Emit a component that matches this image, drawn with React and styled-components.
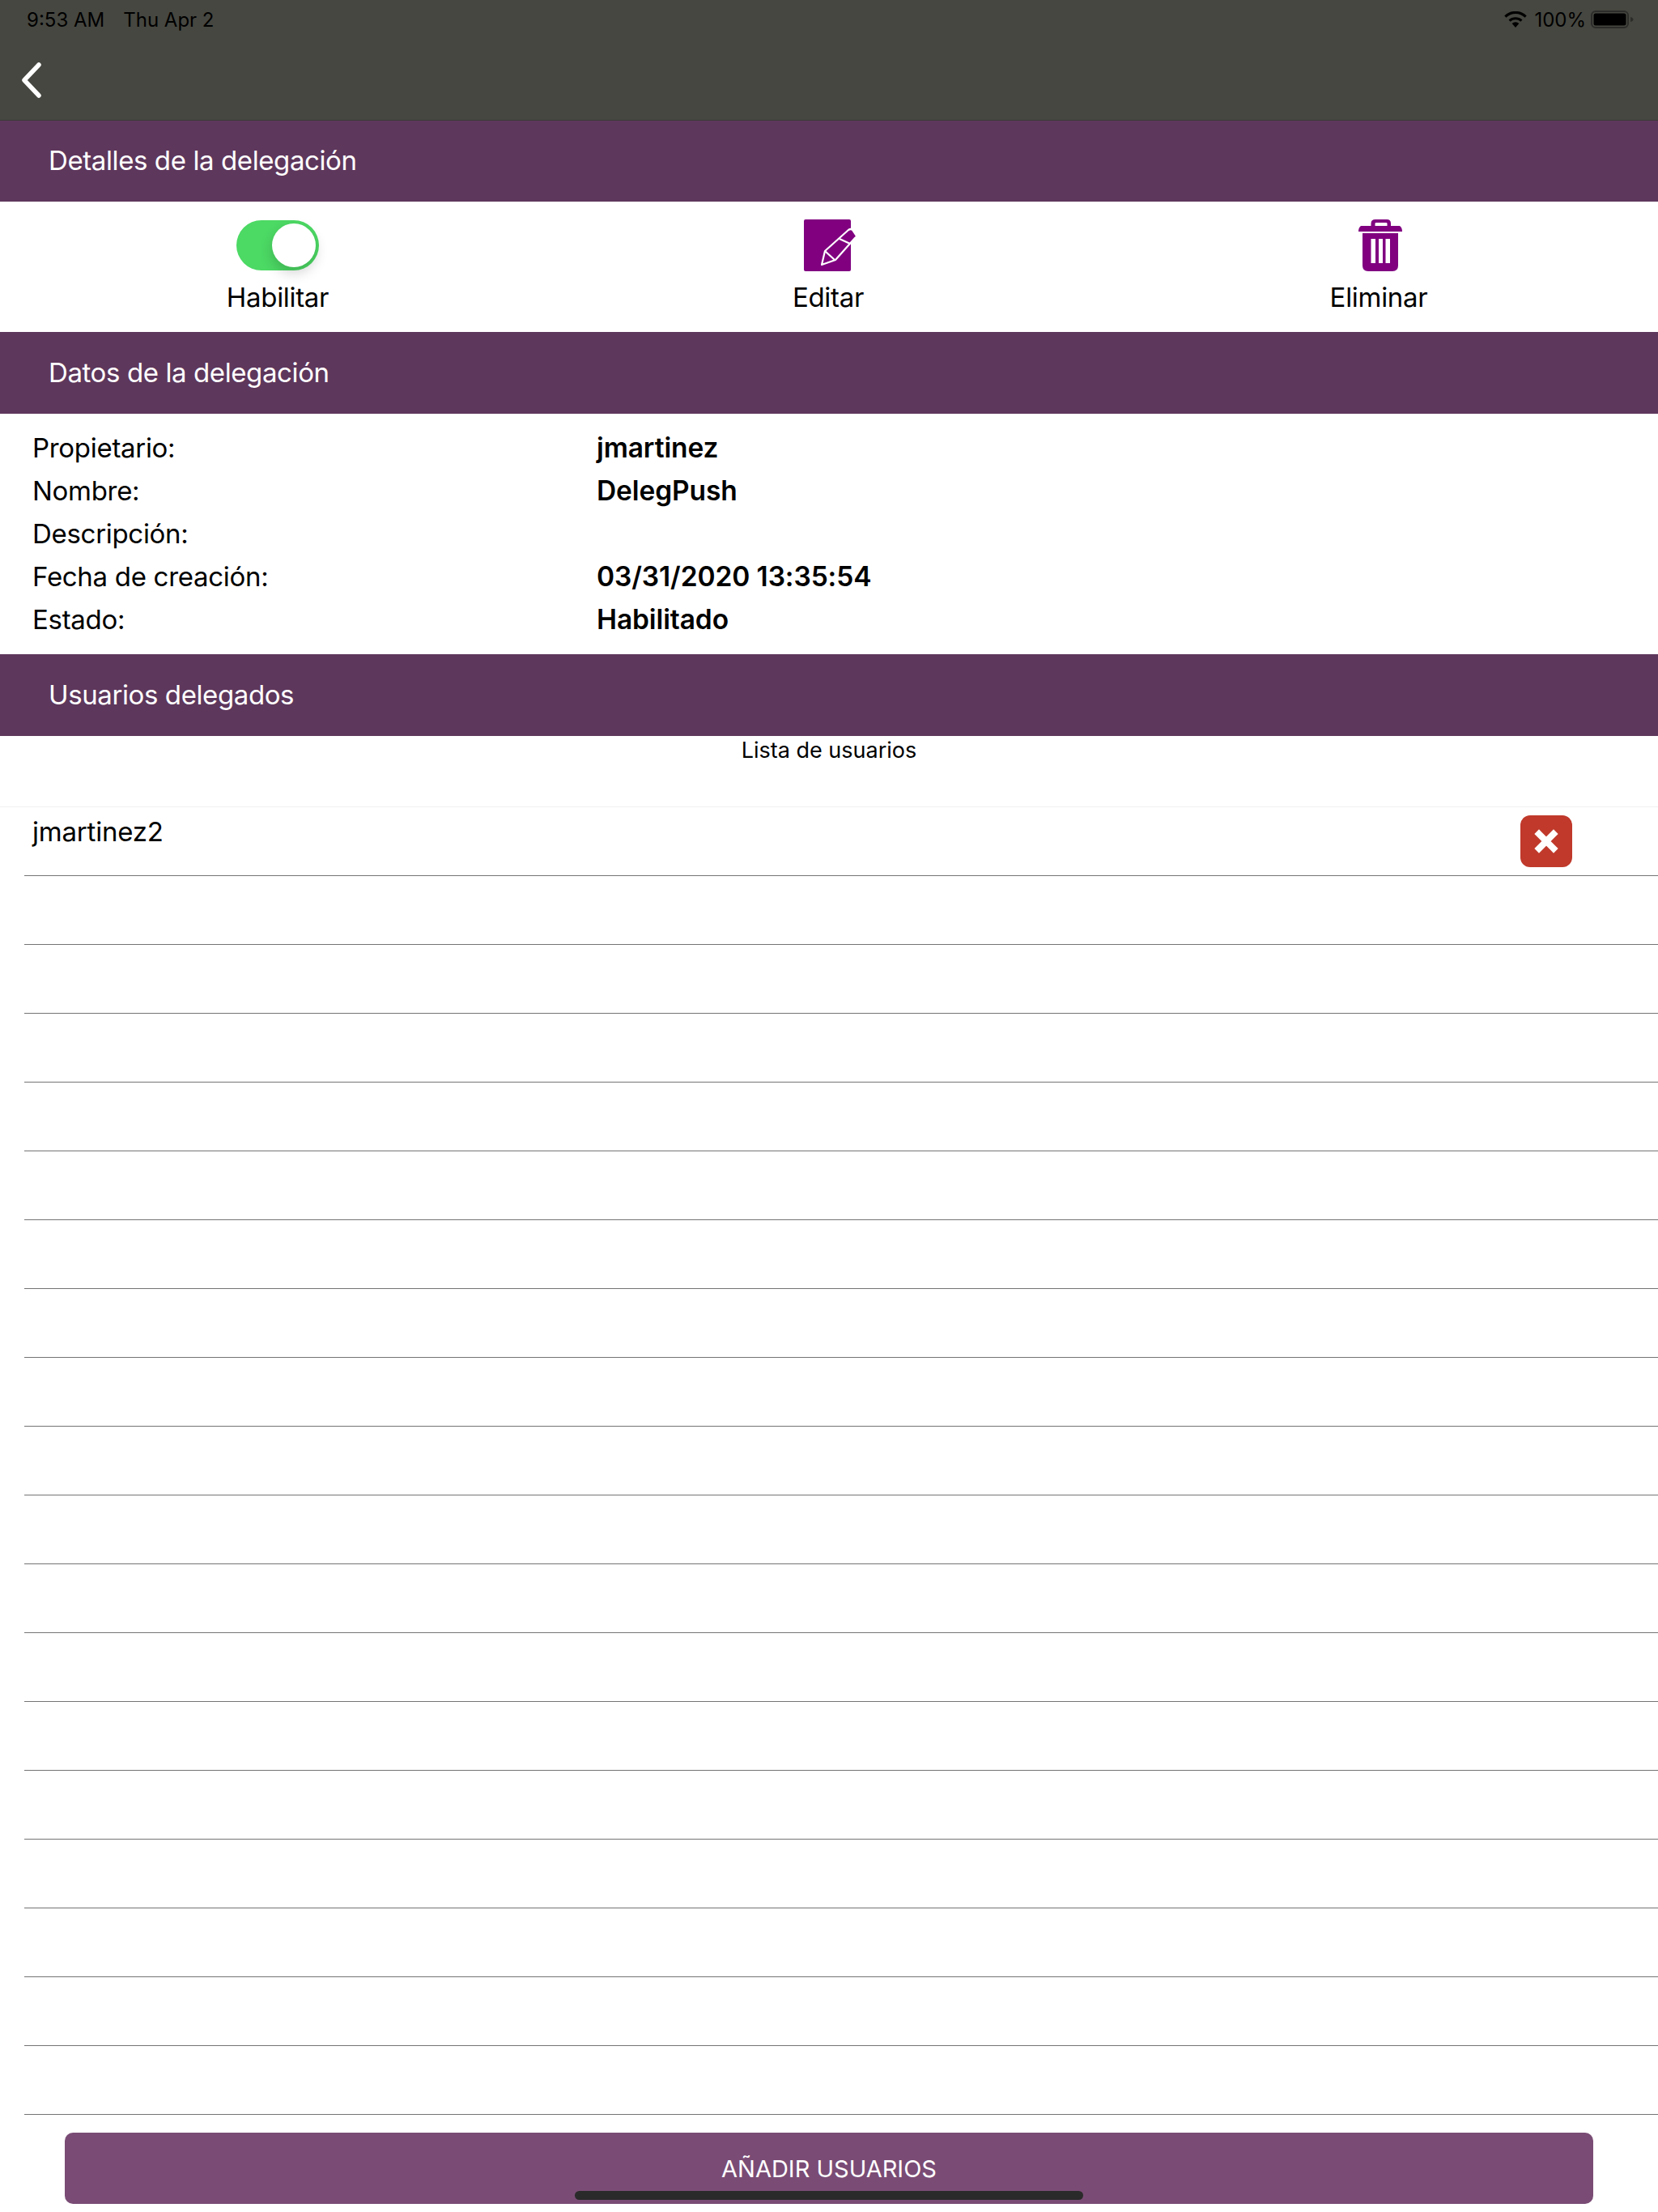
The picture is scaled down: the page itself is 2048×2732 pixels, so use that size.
import React from "react";
import styled, { createGlobalStyle } from "styled-components";

const GlobalStyle = createGlobalStyle`
  html, body {
    margin: 0;
    padding: 0;
    background: #fff;
  }
  * {
    box-sizing: border-box;
  }
`;

const Page = styled.div`
  position: relative;
  width: 2048px;
  height: 2732px;
  overflow: hidden;
  background: #fff;
  font-family: Inter, "Liberation Sans", sans-serif;
  color: #000;
`;

const Header = styled.header`
  height: 149px;
  background: #464740;
  border-bottom: 1px solid #3a3a38;
`;

const StatusBar = styled.div`
  height: 48px;
  display: flex;
  align-items: center;
  justify-content: space-between;
  padding: 0 30px 0 33px;
  font-size: 24px;
  color: #000;
`;

const StatusLeft = styled.div`
  display: flex;
  gap: 23px;
`;

const StatusRight = styled.div`
  display: flex;
  align-items: center;
  gap: 9px;
`;

const BatteryText = styled.span`
  margin-right: -3px;
`;

const BackButton = styled.div`
  padding: 29px 0 0 26px;
  line-height: 0;
`;

const SectionBar = styled.div`
  height: ${(props) => props.$height || 101}px;
  display: flex;
  align-items: center;
  padding: 0 0 2px 60px;
  background: #5e375c;
  color: #fff;
  font-size: 33px;
  letter-spacing: -0.4px;
`;

const Actions = styled.div`
  height: 161px;
  display: grid;
  grid-template-columns: repeat(3, 680px);
  padding: 22px 0 0 3px;
`;

const Action = styled.div`
  display: flex;
  flex-direction: column;
  align-items: center;
`;

const ActionIcon = styled.div`
  height: 64px;
  display: flex;
  align-items: center;
  justify-content: center;
  line-height: 0;
`;

const ActionLabel = styled.div`
  margin-top: 10px;
  font-size: 33px;
  letter-spacing: -0.3px;
  line-height: 44px;
`;

const Toggle = styled.div`
  position: relative;
  width: 102px;
  height: 62px;
  border-radius: 31px;
  background: #4cd964;
`;

const Knob = styled.div`
  position: absolute;
  top: 4px;
  right: 4px;
  width: 54px;
  height: 54px;
  border-radius: 50%;
  background: #fff;
  box-shadow: 0 7px 16px rgba(0, 0, 0, 0.18);
`;

const Details = styled.div`
  height: 297px;
  padding: 15px 0 0 40px;
`;

const DetailRow = styled.div`
  display: grid;
  grid-template-columns: 697px 1fr;
  height: 53px;
  align-items: center;
  font-size: 33px;
  letter-spacing: -0.3px;
`;

const DetailValue = styled.div`
  font-size: 33.5px;
  font-weight: 600;
  letter-spacing: -0.1px;
`;

const ListCaption = styled.div`
  height: 87px;
  padding-top: 4px;
  text-align: center;
  font-size: 27px;
  line-height: 28px;
`;

const List = styled.div`
  border-top: 1px solid #f0f0f0;
`;

const Row = styled.div`
  height: 85px;
  margin-left: 30px;
  padding: 10px 106px 0 10px;
  display: flex;
  align-items: flex-start;
  justify-content: space-between;
  border-bottom: 1px solid #747474;
  font-size: 33px;
  letter-spacing: -0.2px;
`;

const UserName = styled.div`
  line-height: 40px;
`;

const RemoveButton = styled.div`
  width: 64px;
  height: 64px;
  display: flex;
  align-items: center;
  justify-content: center;
  border-radius: 12px;
  background: #c0392b;
  line-height: 0;
`;

const Footer = styled.div`
  padding: 22px 80px 0;
`;

const AddButton = styled.div`
  height: 88px;
  display: flex;
  align-items: center;
  justify-content: center;
  border-radius: 10px;
  background: #7a4c75;
  color: #fff;
  font-size: 29px;
`;

const HomeIndicator = styled.div`
  position: absolute;
  left: 710px;
  bottom: 15px;
  width: 628px;
  height: 11px;
  border-radius: 6px;
  background: #2a2a2a;
`;

const WifiIcon = () => (
  <svg width="28" height="20" viewBox="0 0 28 20">
    <path d="M14 20 L9.6 15 A6.6 6.6 0 0 1 18.4 15 Z" fill="#000" />
    <path d="M6.6 11.6 A11 11 0 0 1 21.4 11.6" fill="none" stroke="#000" strokeWidth="3.2" />
    <path d="M1.4 6.6 A18 18 0 0 1 26.6 6.6" fill="none" stroke="#000" strokeWidth="3.2" />
  </svg>
);

const BatteryIcon = () => (
  <svg width="53" height="22" viewBox="0 0 53 22">
    <rect x="1" y="1" width="45" height="20" rx="5" fill="none" stroke="#2c2c2a" strokeWidth="2" />
    <rect x="3.5" y="3.5" width="40" height="15" rx="2.5" fill="#000" />
    <path d="M49 8 C51 8.5 52.5 9.5 52.5 11 C52.5 12.5 51 13.5 49 14 Z" fill="#2c2c2a" />
  </svg>
);

const BackIcon = () => (
  <svg width="26" height="44" viewBox="0 0 26 44">
    <path d="M22 3 L4 22 L22 41" fill="none" stroke="#fff" strokeWidth="5.5" strokeLinecap="round" strokeLinejoin="round" />
  </svg>
);

const EditIcon = () => (
  <svg width="66" height="64" viewBox="0 0 66 64" style={{ marginLeft: 5 }}>
    <rect width="58" height="64" rx="2" fill="#800080" />
    <path
      d="M22 56 L26 39 L55 13 Q58 11 60 13 L64 19 Q66 21 63 23 L39 50 Z"
      fill="#800080"
      stroke="#fff"
      strokeWidth="2.2"
      strokeLinejoin="round"
    />
    <path d="M26 39 L38 50 M44 24 L57 30" stroke="#fff" strokeWidth="2.2" fill="none" />
  </svg>
);

const TrashIcon = () => (
  <svg width="54" height="64" viewBox="0 0 54 64" style={{ marginLeft: 4 }}>
    <path d="M15.5 8 V5 Q15.5 0 21 0 H35 Q40 0 40 5 V8 H35.5 V5 Q35.5 4 34 4 H22 Q20.5 4 20.5 5 V8 Z" fill="#800080" />
    <path d="M3 8 H51 Q54 10 54 15 H0 Q0 10 3 8 Z" fill="#800080" />
    <path d="M5 17 H49 V57 Q49 64 42 64 H12 Q5 64 5 57 Z" fill="#800080" />
    <path d="M15.5 24 H21 V54 H15.5 Z M25 24 H30 V54 H25 Z M33.5 24 H39 V54 H33.5 Z" fill="#fff" />
  </svg>
);

const CloseIcon = () => (
  <svg width="30" height="30" viewBox="0 0 30 30">
    <path d="M6 6 L24 24 M24 6 L6 24" fill="none" stroke="#fff" strokeWidth="8" strokeLinecap="square" />
  </svg>
);

const detailRows = [
  ["Propietario:", "jmartinez"],
  ["Nombre:", "DelegPush"],
  ["Descripción:", ""],
  ["Fecha de creación:", "03/31/2020 13:35:54"],
  ["Estado:", "Habilitado"],
];

const emptyRows = Array.from({ length: 18 }, (_, i) => i);

const App = () => {
  return (
    <Page>
      <GlobalStyle />
      <Header>
        <StatusBar>
          <StatusLeft>
            <span>9:53 AM</span>
            <span>Thu Apr 2</span>
          </StatusLeft>
          <StatusRight>
            <WifiIcon />
            <BatteryText>100%</BatteryText>
            <BatteryIcon />
          </StatusRight>
        </StatusBar>
        <BackButton>
          <BackIcon />
        </BackButton>
      </Header>

      <SectionBar $height={100}>Detalles de la delegación</SectionBar>
      <Actions>
        <Action>
          <ActionIcon>
            <Toggle>
              <Knob />
            </Toggle>
          </ActionIcon>
          <ActionLabel>Habilitar</ActionLabel>
        </Action>
        <Action>
          <ActionIcon>
            <EditIcon />
          </ActionIcon>
          <ActionLabel>Editar</ActionLabel>
        </Action>
        <Action>
          <ActionIcon>
            <TrashIcon />
          </ActionIcon>
          <ActionLabel>Eliminar</ActionLabel>
        </Action>
      </Actions>

      <SectionBar>Datos de la delegación</SectionBar>
      <Details>
        {detailRows.map(([label, value]) => (
          <DetailRow key={label}>
            <div>{label}</div>
            <DetailValue>{value}</DetailValue>
          </DetailRow>
        ))}
      </Details>

      <SectionBar>Usuarios delegados</SectionBar>
      <ListCaption>Lista de usuarios</ListCaption>
      <List>
        <Row>
          <UserName>jmartinez2</UserName>
          <RemoveButton>
            <CloseIcon />
          </RemoveButton>
        </Row>
        {emptyRows.map((i) => (
          <Row key={i} />
        ))}
      </List>

      <Footer>
        <AddButton>AÑADIR USUARIOS</AddButton>
      </Footer>
      <HomeIndicator />
    </Page>
  );
};

export default App;
